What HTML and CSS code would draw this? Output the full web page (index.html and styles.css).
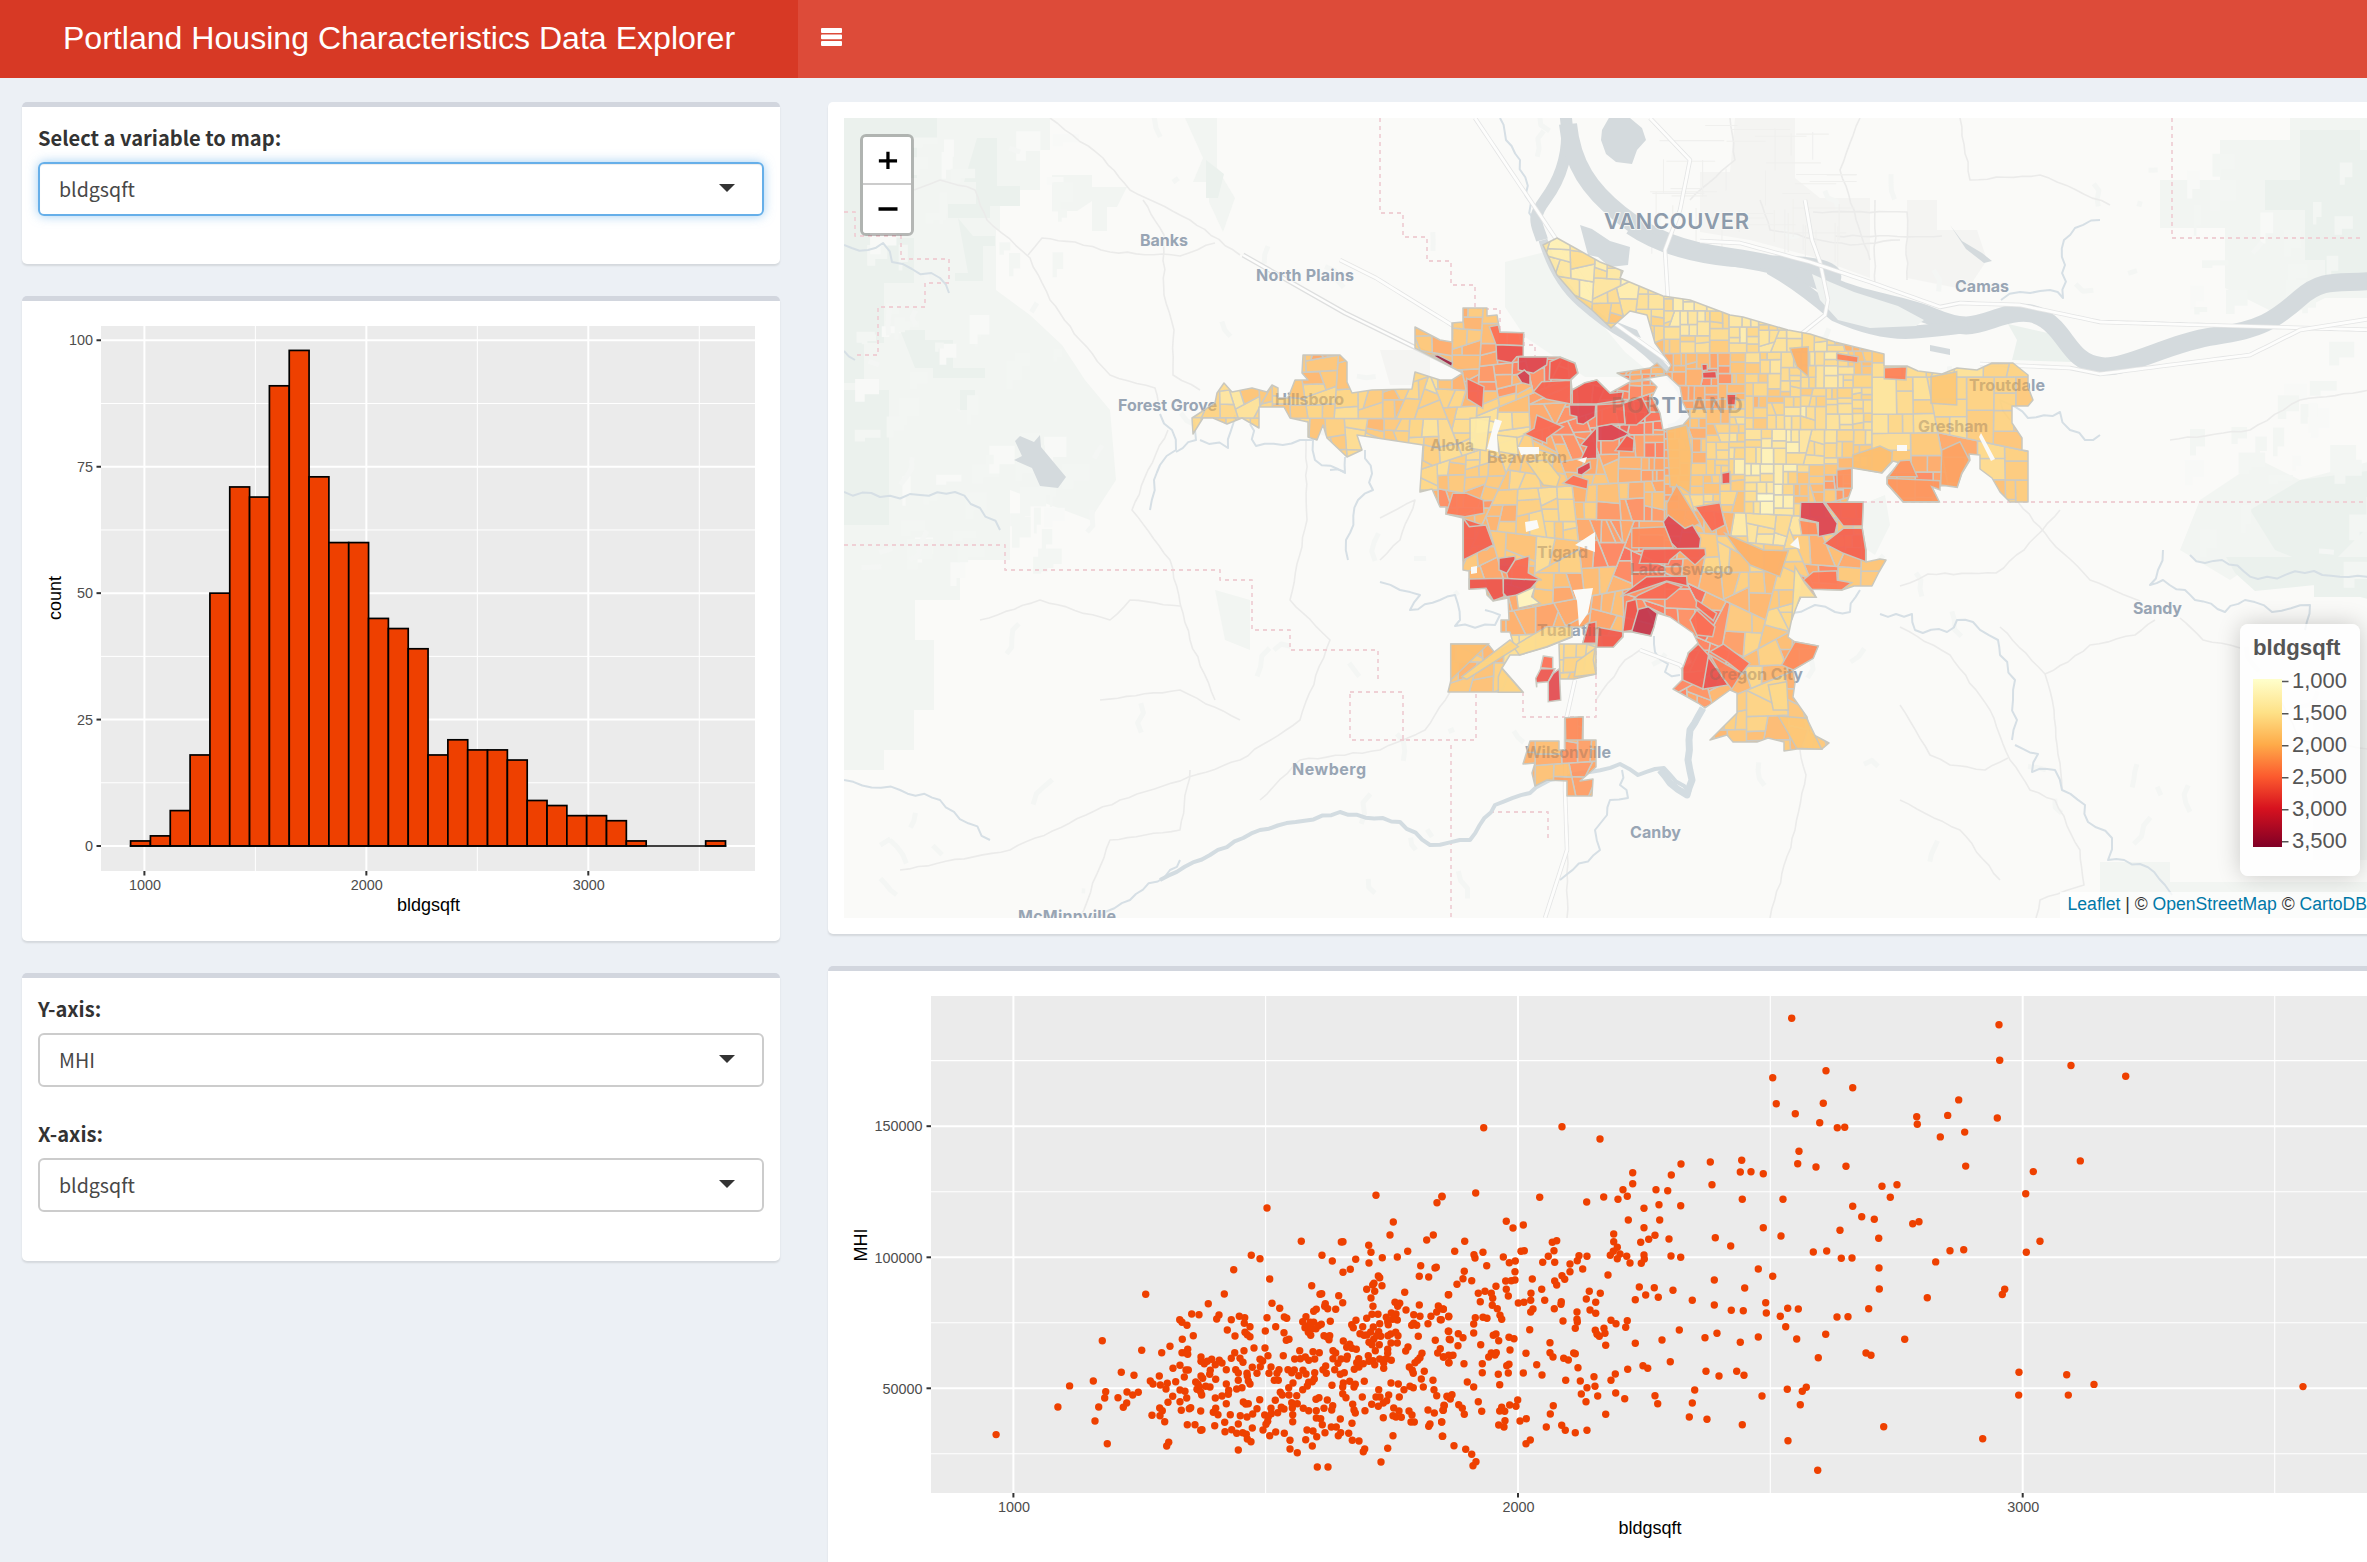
FILE: index.html
```html
<!DOCTYPE html>
<html lang="en">
<head>
<meta charset="utf-8">
<title>Portland Housing Characteristics Data Explorer</title>
<link rel="stylesheet" href="styles.css">
</head>
<body>
<header class="header">
  <div class="logo">Portland Housing Characteristics Data Explorer</div>
  <svg class="burger" width="22" height="19" viewBox="0 0 22 19"><path fill="#fff" d="M1 0h19a1 1 0 0 1 1 1v3a1 1 0 0 1-1 1H1a1 1 0 0 1-1-1V1a1 1 0 0 1 1-1zM1 6.6h19a1 1 0 0 1 1 1v2.6a1 1 0 0 1-1 1H1a1 1 0 0 1-1-1V7.600a1 1 0 0 1 1-1zM1 13h19a1 1 0 0 1 1 1v3a1 1 0 0 1-1 1H1a1 1 0 0 1-1-1v-3a1 1 0 0 1 1-1z"/></svg>
</header>
<main class="content">
  <div class="side">
    <section class="box box-select">
      <label class="label">Select a variable to map:</label>
      <div class="select focus"><span>bldgsqft</span><i class="caret"></i></div>
    </section>
    <section class="box box-hist">
      <svg id="hist" class="plot" width="758" height="640" viewBox="22 301 758 640"></svg>
    </section>
    <section class="box box-axes">
      <label class="label">Y-axis:</label>
      <div class="select"><span>MHI</span><i class="caret"></i></div>
      <label class="label label-next">X-axis:</label>
      <div class="select"><span>bldgsqft</span><i class="caret"></i></div>
    </section>
  </div>
  <div class="wide">
    <section class="box box-map">
      <div class="map">
        <svg id="map" class="plot" width="1531" height="800" viewBox="844 118 1531 800"></svg>
        <div class="zoom">
          <svg class="zoom-btn" width="48" height="48" viewBox="0 0 48 48"><path d="M15.500 25h19M25 15.500v18" stroke="#000" stroke-width="3.400"/></svg>
          <svg class="zoom-btn zoom-out" width="48" height="48" viewBox="0 0 48 48"><path d="M15.500 24h19" stroke="#000" stroke-width="3.400"/></svg>
        </div>
        <div class="legend">
          <svg class="plot" width="120" height="252" viewBox="2240 624 120 252">
            <defs><linearGradient id="ramp" x1="0" y1="0" x2="0" y2="1"><stop offset="0" stop-color="#ffffcc"/><stop offset=".2" stop-color="#fee187"/><stop offset=".39" stop-color="#feab49"/><stop offset=".58" stop-color="#fc5b2e"/><stop offset=".77" stop-color="#d7121f"/><stop offset="1" stop-color="#800026"/></linearGradient></defs>
            <text class="legend-title" x="2253" y="655">bldgsqft</text>
            <rect x="2253" y="679" width="29" height="168" fill="url(#ramp)"/>
            <path d="M2282 681.500h6.500M2282 713.700h6.500M2282 745.700h6.500M2282 777.700h6.500M2282 809.700h6.500M2282 841.700h6.500" stroke="#555" stroke-width="1.500"/>
            <g class="legend-text"><text x="2347" y="688">1,000</text><text x="2347" y="720">1,500</text><text x="2347" y="752">2,000</text><text x="2347" y="784">2,500</text><text x="2347" y="816">3,000</text><text x="2347" y="848">3,500</text></g>
          </svg>
        </div>
        <div class="attribution"><a>Leaflet</a> | © <a>OpenStreetMap</a> © <a>CartoDB</a></div>
      </div>
    </section>
    <section class="box box-scatter">
      <svg id="scatter" class="plot" width="1563" height="620" viewBox="828 971 1563 620"></svg>
    </section>
  </div>
</main>
<script src="charts.js"></script>
</body>
</html>
```

FILE: styles.css
```css
* { box-sizing: border-box; }
html, body { height: 1562px; overflow: hidden; }
body { margin: 0; background: #ecf0f5; font-family: "Noto Sans CJK SC", "Noto Sans", sans-serif; color: #333; }
.header { display: flex; align-items: center; height: 78px; background: #dd4b39; }
.logo { width: 798px; height: 78px; line-height: 77px; background: #d73925; color: #fff; text-align: center; font-family: "Liberation Sans", Arial, sans-serif; font-size: 32.1px; white-space: nowrap; }
.burger { margin: -4px 0 0 23px; }
.content { display: flex; gap: 48px; padding: 24px 0 0 22px; }
.side { width: 758px; flex: none; display: flex; flex-direction: column; gap: 32px; }
.wide { width: 1563px; flex: none; display: flex; flex-direction: column; gap: 32px; }
.box { background: #fff; border-top: 5px solid #d2d6de; border-radius: 5px; box-shadow: 0 2px 2px rgba(0,0,0,.1); }
.box-select { height: 162px; padding: 16px 16px 0; }
.box-hist { height: 645px; overflow: hidden; }
.box-axes { height: 288px; padding: 16px 16px 0; }
.box-map { height: 832px; border-top: 0; padding: 16px; }
.box-scatter { height: 640px; }
.label { display: block; height: 39px; line-height: 29px; font-size: 20.1px; font-weight: 700; }
.label-next { margin-top: 32px; }
.select { display: flex; justify-content: space-between; align-items: center; height: 54px; border: 2px solid #ccc; border-radius: 6px; padding: 0 27px 0 19px; font-size: 19.6px; line-height: 50px; color: #484848; }
.focus { border-color: #66afe9; box-shadow: inset 0 1px 1px rgba(0,0,0,.075), 0 0 11px rgba(102,175,233,.6); }
.caret { width: 0; height: 0; border: 8px solid transparent; border-top: 8px solid #333; border-bottom: 0; margin-top: -2px; }
.plot { display: block; }
.map { position: relative; width: 1531px; height: 800px; overflow: hidden; }
.zoom { position: absolute; left: 16px; top: 16px; width: 54px; height: 102px; border: 3px solid rgba(0,0,0,.25); border-radius: 6px; background-clip: padding-box; overflow: hidden; }
.zoom-btn { display: block; background: #fff; }
.zoom-btn:first-child { height: 46px; }
.zoom-out { height: 50px; border-top: 2px solid #ccc; }
.legend { position: absolute; left: 1396px; top: 506px; width: 120px; height: 252px; border-radius: 8px; background: rgba(255,255,255,.8); box-shadow: 0 0 23px rgba(0,0,0,.2); }
.legend-title { font: 700 22.2px "Liberation Sans", Arial, sans-serif; fill: #555; }
.legend-text { font: 22px "Liberation Sans", Arial, sans-serif; fill: #555; text-anchor: end; }
.attribution { position: absolute; right: 0; bottom: 0; height: 26px; line-height: 25px; padding: 0 8px; background: rgba(255,255,255,.7); font-family: "Liberation Sans", Arial, sans-serif; font-size: 17.6px; white-space: nowrap; }
.attribution a { color: #0078a8; }
.tick-text { font: 14.4px "Liberation Sans", Arial, sans-serif; fill: #4d4d4d; }
.axis-title { font: 18px "Liberation Sans", Arial, sans-serif; fill: #000; text-anchor: middle; }
.place { font: 700 16px Inter, sans-serif; fill: #98a5b4; stroke: #fafaf8; stroke-width: 1.500px; paint-order: stroke; }
.city { font-weight: 600; font-size: 22px; fill: #8d9bab; }
.veiled .place { fill: #7d6a5a; stroke: none; }
```

FILE: charts.js
```js
const $ = id => document.getElementById(id);

/* ---------- histogram ---------- */
(() => {
  const counts = [1,2,7,18,50,71,69,91,98,73,60,60,45,43,39,18,21,19,19,17,9,8,6,6,5,1,0,0,0,1];
  const y = v => 846 - v * 5.057, x = v => 144.4 + (v - 1000) * .22195;
  let s = '<rect x="101" y="326" width="654" height="545" fill="#ebebeb"/>';
  const line = (x1, y1, x2, y2, w, c) => `<path d="M${x1} ${y1}L${x2} ${y2}" stroke="${c}" stroke-width="${w}"/>`;
  for (const v of [12.5, 37.5, 62.5, 87.5]) s += line(101, y(v), 755, y(v), 1, '#fff');
  for (const v of [1500, 2500, 3500]) s += line(x(v), 326, x(v), 871, 1, '#fff');
  for (const v of [0, 25, 50, 75, 100]) {
    s += line(101, y(v), 755, y(v), 2, '#fff') + line(96.5, y(v), 101, y(v), 2, '#333');
    s += `<text class="tick-text" x="93" y="${y(v) + 5}" text-anchor="end">${v}</text>`;
  }
  for (const v of [1000, 2000, 3000]) {
    s += line(x(v), 326, x(v), 871, 2, '#fff') + line(x(v), 871, x(v), 875.5, 2, '#333');
    s += `<text class="tick-text" x="${x(v) + .5}" y="890" text-anchor="middle">${v}</text>`;
  }
  counts.forEach((c, i) => {
    s += `<rect x="${130.6 + i * 19.83}" y="${y(c)}" width="19.83" height="${c * 5.057}" fill="#ee4000" stroke="#000" stroke-width="1.7"/>`;
  });
  s += line(129.8, 846, 726.3, 846, 1.7, '#000');
  s += '<text class="axis-title" x="428.500" y="911">bldgsqft</text><text class="axis-title" transform="translate(61 598)rotate(-90)">count</text>';
  $('hist').innerHTML = s;
})();

/* ---------- scatter ---------- */
(() => {
  const groups = [
    {x: 830, y: 960, sx: 2.8, sy: 2.613, p: '465 1240 638 1168 671 1113'},
    {x: 1090, y: 1180, sx: 3, sy: 3, p: `10 603 37 482 47 635 44 654 26 681 15 723 52 791 94 577 132 586 84 653 111 636 128 645 145 637 110 669 100 682 155 511 167 343 215 518 240 499 181 603 189 612 208 588 211 615 232 610 228 627 248 649 234 667 257 605 249 565 270 556 283 591 288 570 295 570 276 518 293 508 293 523 286 518 277 478 310 467 269 419 276 427 291 436 305 402 327 404 355 371 403 342 431 269 484 226 510 236 531 84 539 297 546 370 569 385 583 411 590 415 531 413 557 440 526 453 380 417 387 405 424 419 412 450 448 409 464 413 463 430 480 440 465 457 472 464 480 470 435 468 582 458 589 481 597 478 634 184 696 226 727 243 754 186 759 185 836 196 843 217 837 249 797 238 781 268 759 277 877 233 922 231 953 214 900 165 910 126 858 46 1041 68 1056 49 1010 180 1030 165 992 257 1035 264 1039 262 988 289 1016 291 665 317 690 343 695 341 746 347 758 368 706 371 704 379 713 386 737 388 671 394 679 388 648 410 865 288 869 293 852 310 848 315 830 328 854 334 876 317 843 354 849 379 944 337 915 367 929 370 923 379 948 390 988 375 971 404 990 409 904 399 918 402 889 412 922 420 895 434 893 425 908 418 846 403 864 403 830 415 798 421 785 434 790 443 818 440 869 431 850 441 810 461 822 466 831 465 842 456 866 455 872 469 860 467 851 478 837 487 846 494 868 494 856 512 893 508 893 520 638 425 645 443 661 427 671 427 655 437 666 446 678 446 686 437 694 433 721 424 655 457 662 466 702 467 719 467 717 479 711 471 760 483 779 493 770 502 786 505 799 508 903 489 922 489 894 467 902 462 917 457 924 467 965 436 980 436 971 430 985 469 1014 431 1023 409 1051 419 1045 378 1049 386 1060 387 1040 396 1075 344 1076 409 1075 454 1078 478 1036 481 954 501 947 513 1051 506 1043 519 1061 531 1076 526 1076 548 996 520 990 533 975 548 983 541 958 561 967 571 970 580 1003 574 994 597 1029 601 1000 621 970 623 960 619 942 629 928 651 903 609 925 612 896 645 890 662 880 669 858 651 870 651 866 629 845 673 865 679 823 604 817 651 796 613 792 621 779 604 760 609 758 621 758 641 768 653 788 673 792 690 825 692 796 699 880 713 911 684 927 693 909 707 918 711 934 712 957 693 966 705 963 726 973 726 1014 690 1033 699 1020 732 1016 739 1055 726 1060 691 1063 677 1040 647 1071 649 1032 629 1057 769 909 767 893 805 873 846 824 807 820 815 807 783 787 781 776 760 786 730 751 717 745 767 752 758 739 741 724 741 705 758 697 734 680 770 669 753 651 750 647 779 667 798 682 861 714 861 622 818 600 807 600 781 583 760 557 756 539 767 487 744 483 785 472 777 469 763 458 758 440 760 445 732 425 749 405 755 404 727 374 737 336 749 332 751 315 734 292 734 224 725 217 692 209 684 210 707 186 706 236 787 230 798 445 810 274 691 302 683 298 686 332 693 370 697 377 685 384 704 421 704 451 707 471 711 488 702 501 686 509 659 475 671 460 666 467 672 409 671 376 654 396 648 415 643 416 631 409 612 377 598 445 601 440 627 456 623 480 612 475 603 471 580 472 588 437 569 445 579 409 569 376 554 388 541 396 549 365 538 333 531 333 544 343 551 352 544 361 571 359 583 333 588 338 595 317 606 324 613 321 628 328 621 332 636 335 645 347 619 360 621 270 630 285 634 290 654 270 665 434 518 424 535 450 535 459 547 462 512 492 504 525 504 534 527 510 538 518 543 511 560 487 562 501 580 537 580 543 561 561 580 567 569 580 527 553 601 565 601 571 637 577 645 597 645 620 647 596 623 609 609 605 668 622 671 607 684 608 704 608 725 582 687 574 682 563 698 543 685 544 701 556 661 524 705 535 711 533 724 528 733 519 750 640 685 656 692 679 692 678 658 687 653 712 660 702 685 728 677 725 690 679 714 692 716 638 629 652 618 656 607 667 605 673 597 674 578 648 582 626 587 639 571 605 578 613 570 594 569 614 537 631 536 629 512 646 531 656 541 669 515 674 537 688 518 707 558 699 569 709 580 734 569 729 512 737 519 729 536 744 550 753 537 770 537 772 529 763 578 751 583 726 616 793 568 806 536 800 548 807 561 820 551 835 527 837 544 849 542 854 554 869 537 881 549 881 565 889 536 904 541 880 540`},
    {x: 1440, y: 980, sx: 3, sy: 3, p: `1055 115 998 293 1009 371 1158 272 1238 323 1150 370 1066 401 1139 428 1192 443 1214 442 1430 410 1432 433 131 443 366 440 480 477 1077 514 1073 551 1128 561 1218 559 811 546 905 541 901 576 933 575 970 581 816 614 723 552 694 585 578 578 578 611 549 629 562 649 534 658 491 651 440 666 299 652 107 639 6 650 648 629 683 632 657 674 612 685 722 677 907 658 1029 658 1326 619 1371 614 1351 652 1238 679 1265 710 1303 718 1200 751 1316 775 1418 731 1437 725 565 720 659 720 612 743 970 743 1023 768 1120 816 1160 813 1204 835 1236 834 199 724 219 744 250 735 826 773 872 798 74 784 44 814 102 824 105 834 129 817 140 857 190 831 208 848 226 843 243 814 253 812 337 787 350 782 342 812 325 829 308 847 344 847 521 762 521 785 532 802 520 814 511 826 540 822 532 836 560 829 570 849 602 787 626 778 645 766 687 777 612 825 613 837 604 850 693 828 722 832 417 827 441 829 412 842 390 852 428 867 390 875 366 887 374 898 344 903 350 915 504 885 73 874 69 896 95 902 51 913 26 944 168 919 197 903 214 902 225 900 225 875 199 928 205 948 277 897 305 928 273 940 314 961 272 961 252 967 235 969 115 940 135 934 154 940 158 955 121 965 157 976 172 986 279 987 272 996 343 986 364 965 363 973 448 934 481 940 439 957 467 967 450 990 467 1000 411 996 411 1018 412 1026 406 1045 369 1023 598 921 643 923 617 945 655 952 699 931 586 959 757 961 823 900 823 975 955 867 998 889 914 924 874 991 910 992 977 968 979 999 1021 1009 1043 985 1075 987 1037 1040 1317 864 1318 927 1286 986 1191 1011 1224 1010 180 1006 185 1018 106 1013 129 1012 141 1015 101 1032 26 1010 4 1019 10 988 101 1059 55 1061 69 1073 26 1054 31 1079 54 1097 122 1094 160 1066 168 1062 176 1082 207 1072 222 1076 269 1049 513 1021 528 1031 562 1022 557 1042 492 1045 466 1051 495 1060 478 1069 471 1063 497 1096 586 1090 666 1080 718 1050 795 1073 831 1060 901 1087 955 1071 1070 1077 1157 1063 1394 1078 1278 1119 1293 1126 1135 1133 210 1110 154 1119 169 1118 146 1131 165 1125 10 1131 32 1127 39 1126 27 1148 72 1151 127 1151 127 1178 200 1157 207 1153 175 1183 205 1179 250 1179 258 1120 290 1154 306 1185 330 1088 330 1118 339 1131 371 1135 385 1140 401 1119 406 1121 414 1163 377 1201 421 1203 462 1190 441 1223 465 1219 424 1242 438 1265 473 1248 513 1201 526 1182 563 1168 609 1157 623 1165 691 1145 798 1174 837 1188 890 1174 912 1186 82 1206 101 1221 179 1214 36 1244 22 1250 31 1257 115 1265 12 1276 9 1291 56 1274 67 1285 73 1303 125 1294 5 1326 8 1369 42 1397 77 1408 95 1423 108 1445 99 1457 233 1260 209 1275 228 1279 185 1282 179 1293 194 1294 195 1322 176 1335 192 1341 240 1323 259 1316 340 1277 331 1302 319 1341 365 1336 376 1351 406 1358 441 1351 271 1380 258 1391 527 1239 554 1256 497 1303 645 1247 653 1271 764 1230 757 1269 748 1311 801 1318 907 1334 966 1248 1042 1228 1099 1222 1087 1234 1081 1274 1331 1340 1044 1382 1133 1471`},
    {x: 1890, y: 980, sx: 3, sy: 2.703, p: `327 121 329 217 543 231 707 260 206 324 173 366 322 373 224 411 151 424 227 503 571 489 430 518 407 578 450 706 409 736 180 732 221 729 137 762 344 836 337 850 112 859 387 1060 386 1122 530 1067 535 1122 612 1093 1239 1099 278 1240`}
  ];
  const line = (d, w, c) => `<path d="${d}" stroke="${c}" stroke-width="${w}"/>`;
  let s = '<rect x="931" y="996" width="1460" height="497" fill="#ebebeb"/>';
  for (const y of [1060.6, 1191.7, 1322.8, 1453.8]) s += line(`M931 ${y}H2400`, 1.1, '#fff');
  for (const x of [1265.6, 1770.3, 2274.7]) s += line(`M${x} 996V1493`, 1.1, '#fff');
  [[1126.2, '150000'], [1257.3, '100000'], [1388.3, '50000']].forEach(([y, t]) => {
    s += line(`M931 ${y}H2400`, 2, '#fff') + line(`M926.500 ${y}h4.500`, 2, '#333') + `<text class="tick-text" x="922.500" y="${y + 5.2}" text-anchor="end">${t}</text>`;
  });
  [[1013.4, 1000], [1518, 2000], [2022.7, 3000]].forEach(([x, t]) => {
    s += line(`M${x} 996V1493`, 2, '#fff') + line(`M${x} 1493v4.500`, 2, '#333') + `<text class="tick-text" x="${x + .6}" y="1512" text-anchor="middle">${t}</text>`;
  });
  s += '<g fill="#ee4000">';
  for (const g of groups) {
    const n = g.p.split(/\s+/).map(Number);
    for (let i = 0; i < n.length; i += 2) s += `<circle cx="${(g.x + n[i] / g.sx).toFixed(1)}" cy="${(g.y + n[i + 1] / g.sy).toFixed(1)}" r="3.700"/>`;
  }
  s += '</g><text class="axis-title" x="1650" y="1534">bldgsqft</text><text class="axis-title" transform="translate(867 1245)rotate(-90)">MHI</text>';
  $('scatter').innerHTML = s;
})();

/* ---------- map ---------- */
(() => {
  let seed = 7;
  const rnd = () => (seed = (seed * 16807) % 2147483647) / 2147483647;
  // wiggly line through the given points
  const river = (pts, amp = 4) => {
    let d = `M${pts[0]} ${pts[1]}`;
    for (let i = 2; i < pts.length; i += 2) {
      const dx = pts[i] - pts[i - 2], dy = pts[i + 1] - pts[i - 1], L = Math.hypot(dx, dy), n = Math.max(1, Math.round(L / 9));
      for (let k = 1; k <= n; k++) {
        const o = k < n ? (rnd() - .5) * amp : 0;
        d += `L${(pts[i - 2] + dx * k / n - dy / L * o).toFixed(1)} ${(pts[i - 1] + dy * k / n + dx / L * o).toFixed(1)}`;
      }
    }
    return d;
  };
  const path = (d, c, w, extra = '') => `<path d="${d}" fill="none" stroke="${c}" stroke-width="${w}" stroke-linejoin="round" ${extra}/>`;
  let s = '<rect x="844" y="118" width="1531" height="800" fill="#fafaf8"/>';

  // forest
  s += '<g fill="#f2f5f2"><path d="M844 118H1050V150H1040V190H1000V230H996V290L1030 315L1062 345L1085 380L1110 410L1116 480L1090 520L1010 490V560H960V600H915V640H844z"/><path d="M1052 175h40v12h35l-10 20h-10v24h-15v-30l-15 10h-25zM1185 118h32v50l18 30-12 34-14-30v-20h-16l10-24z"/><path d="M1505 262l40-10 30 40 50 60 30 25-70 0-60-40-20-30z"/><path d="M2160 180h60v-40h70v-22h85v180h-50l-40 20-60-30v-60h-65z"/><path d="M2200 500l60-40 40 20 75-20v120h-75l-40-20-30 20-50-30z"/><path d="M2100 862h70v20h205v36h-275zM2313 700h62v160h-62zM1860 505l25-10 5 30-15 30-15-10z"/><path d="M844 640h90v70h-20v40h-30v20h-40zM1215 590l35 10v50l-25-10z"/></g>';
  s += '<g fill="#ebf1ed"><path d="M844 118h93v25h-20v35h-28v60h25v45h-30v60h-20v40h-20zM844 390h45v135h-45zM977 138h20v48h23v20h-30v12h-42v-14h28v-22h-12zM958 218l15 18h22v10h-12v35h-28v-8h13zM900 330h25v10h28v28h32v10h-52v-10h-18zM960 390h15v20h-15zM1206 160l18 14-6 24h-12z"/><path d="M2226 557h149v44l-60-16-60 6-20-18zM2314 573h61v24h-61z"/><path d="M2008 324l44 10 20 28-60-2 5-20zM2300 130h60v20h15v130h-50v-20h-20v-50h-40v-30h35z"/><path d="M2250 510l50-30 75-10v50l-50 50-50-20z"/></g>';
  // urban grey
  s += '<g fill="#f4f4f2"><path d="M1735 118h60v60l25 20h50v80l-60-22-60-16-50-8v-60h30zM1907 200h30v30h40l10 30-20 30-60-12v-30zM1380 350h50v35h-40z"/></g>';
  s += '<g fill="#f3f6f3">';
  for (let i = 0; i < 110; i++) {
    const east = rnd() > .7, x = east ? 2180 + rnd() * 190 : 850 + rnd() * 220, y = 125 + rnd() * 440, w = 6 + rnd() * 22, h = 5 + rnd() * 16;
    s += `<path d="M${x} ${y}h${w}v${h}h${-w * .6}v${h * .5}h${-w * .4}z" ${rnd() > .7 ? 'fill="#f8f9f7"' : ''}/>`;
  }
  s += '</g>';
  // terrain-like wisps
  for (let i = 0; i < 90; i++) {
    const x = 860 + rnd() * 1480, y = 130 + rnd() * 780;
    s += path(river([x, y, x + (rnd() - .5) * 40, y + (rnd() - .5) * 60], 10), '#f4f6f4', 5);
  }

  // minor roads
  const roads = [
    [1050,118,1103,158,1130,190,1190,220,1240,255],[914,190,940,180,975,190,987,220,1030,258,1050,300,1080,340,1110,375,1155,388,1160,410],[1143,200,1164,235,1164,295,1174,330,1173,375,1200,390],
    [1028,255,1042,238,1075,242,1110,252,1180,256,1215,243],[1168,430,1148,470,1132,510,1170,560,1190,640,1215,700],[1306,440,1307,520,1290,600,1330,640,1300,720,1240,760,1120,800,1010,850,900,870],
    [1960,118,1970,180,2040,175,2110,205],[1813,212,1907,212,1907,280],[1875,200,1875,285],[1835,236,1942,236],[1760,200,1770,230,1850,245,1900,240],
    [1900,586,1928,574,1996,573,2024,550,2060,510],[2018,502,2050,540,2090,580,2140,601],[2180,618,2203,640,2240,648],[2000,627,2045,674,2054,710,2062,790],[1900,627,1950,655,1990,710,2010,760,2030,790,2055,800],
    [2055,800,2080,850,2084,885,2040,900,2036,918],[1900,705,1930,755,1950,765,1985,770,2008,758],[2045,674,2068,662,2090,645,2135,635,2155,620],[1450,692,1425,730,1380,750,1300,760,1260,800],
    [1800,750,1806,775,1795,830,1770,918],[1596,700,1625,660,1640,650],[1567,790,1567,918],[1380,518,1415,500,1400,540,1380,560],[1844,560,1844,500],[1100,700,1180,690,1240,720],[980,620,1040,600,1110,620,1130,600,1180,606],
    [1860,118,1840,170,1870,260],[1730,118,1735,160,1690,200],[2170,440,2250,430,2300,400,2370,390],[1900,800,1960,830,2000,880],[1080,918,1110,840,1180,830,1190,770],[2280,700,2300,740,2375,750]
  ];
  for (const r of roads) s += path(river(r, 2), '#ebebea', 1.6);
  // street texture around Vancouver
  for (let i = 0; i < 45; i++) {
    const x = 1650 + rnd() * 190, y = 125 + rnd() * 110;
    s += path(rnd() > .5 ? `M${x} ${y}h${20 + rnd() * 50}` : `M${x} ${y}v${15 + rnd() * 40}`, '#f0f0ee', 1.1);
  }
  // county lines
  const county = ['M844 212h11v24h46v23h48v24h-24v24h-47v48h-25','M1380 118v95h23v24h24v24h24v24h24v24h25v24h24v12h11v12','M844 545H1005V570H1220V580H1252V630H1290V650H1378V680','M1350 692h53v48h73v-48M1523 692v25h73v-72M1404 740h-54v-48M1451 745v173M1490 812h58v30','M1863 502H2375M2172 118v120h190'];
  for (const c of county) s += path(c, '#efd0d5', 1.8, 'stroke-dasharray="4 4"');

  // streams
  const streams = [
    [844,245,868,250,883,243,892,262,912,269,940,278,949,293],[844,351,855,360],[844,492,880,497,920,495,955,492,980,508,1000,530],
    [1160,414,1172,430,1176,450,1160,465,1154,480,1150,510],[1176,452,1196,440,1194,420],[1200,440,1228,448,1235,415],[1250,424,1256,446,1300,440,1313,440,1315,460,1345,473,1345,457],
    [1330,470,1345,472],[1365,450,1373,490,1358,500,1346,540,1348,560],[1380,582,1400,590,1420,595,1410,610,1440,600,1455,595,1460,620,1455,626,1495,625,1500,615,1485,610],
    [1880,614,1912,614,1915,630,1947,632,1957,620,1973,622,1998,640,2000,655,2015,680,2013,700,2017,720,2012,740],[2015,745,2038,754,2032,772,2055,770,2062,790,2085,805,2088,822,2112,838,2108,860,2140,864,2165,885,2172,895],
    [2163,550,2158,570,2150,585,2163,580,2185,590,2195,600,2225,612,2245,600,2272,612,2310,605,2305,630],[2190,555,2205,563,2222,560,2258,579,2314,571,2375,580],
    [2010,420,2000,400,2028,418,2060,412,2070,430,2085,440,2100,435],[2001,300,2020,292,2050,290,2063,298,2065,265,2064,240,2075,228,2100,220],[1500,118,1506,140,1520,160,1535,230],
    [1793,613,1815,605,1835,612,1850,612,1860,590],[1654,636,1655,652,1668,664,1665,672,1680,675],[1622,770,1620,785,1628,798,1610,800,1607,815,1595,830,1600,850,1560,880],[844,780,900,790,940,800,990,840],
    [1090,918,1130,900,1170,870,1180,860]
  ];
  for (const r of streams) s += path(river(r, 6), '#d6dfe5', 2);
  s += path(river([1160,880,1210,855,1260,830,1340,812,1400,822,1430,845,1470,840,1495,805,1530,793,1550,780,1590,772,1620,764,1638,775,1664,768,1690,793],3), '#d3dce1', 4);
  s += path(river([1703,708,1690,730,1688,760,1692,780,1687,795,1670,783,1660,770],2), '#d3dce1', 7);

  // Columbia and Willamette
  const W = '#d4dadd';
  s += path('M1565 112C1572 150 1560 180 1545 200S1538 225 1542 240', W, 12);
  s += path('M1568 124C1572 165 1590 190 1620 214S1680 250 1730 257S1800 272 1833 287S1900 303 1933 317S1975 325 2000 317S2040 312 2055 328S2075 362 2100 366S2170 342 2215 336S2275 320 2300 298S2340 285 2380 280', W, 18);
  s += path('M1630 228Q1680 262 1770 262T1825 290M1770 268Q1800 285 1835 315Q1880 335 1915 332T1968 326', W, 13);
  s += path('M1543 240Q1555 280 1580 302T1625 335Q1650 352 1668 373', W, 9);
  s += path('M1668 374Q1685 390 1686 408T1668 428', '#f4f6f6', 8);
  s += `<g fill="${W}"><path d="M1602 130l8-14 20 2 12 10 4 12-9 10-5 14-16-2-10-8-5-14zM1580 225l12 4 18 12 20 6-2 18-18 2-12-10-10-2zM1617 322l20 8 4 8-22-8zM1950 225l12 16 20 12 10 8-8 2-18-14zM1930 345l20 4v6l-20-4z"/>
    <path d="M1015 441l5-5 14 6 6-7 1 12 10 12 15 18-8 11-18-2-8-18-18-8 8-4z"/></g>`;
  s += '<path d="M1812 274l18 8 24 10 44 14 26 14-8 6-46 2-32-8-18-20z" fill="#f0f3f1"/>';

  // freeways
  const fw = [[1340,260,1376,278,1460,330],[1650,118,1690,160,1680,210,1665,250,1668,300],[1805,200,1812,240,1820,262,1828,300,1825,315,1800,335],[1700,241,1740,243,1810,262,1870,282,1940,307,1960,303,2020,305,2100,322,2375,330],
    [1980,364,2070,368,2100,374,2170,365,2250,355,2300,330,2375,318],[1575,680,1566,720,1565,790,1567,850,1545,918],[1640,650,1680,665,1700,690],[1475,118,1530,200,1570,260,1610,320,1680,370]];
  for (const r of fw) { const d = river(r, 0); s += path(d, '#e4e5e5', 4.4) + path(d, '#fdfdfc', 2.8); }
  s += path('M1243 255L1345 313L1465 372', '#dedfdf', 5) + path('M1243 255L1345 313L1465 372', '#fdfdfc', 2.5);

  // place names
  const names = [['Banks',1140,246,48],['North Plains',1256,281,98],['Forest Grove',1118,411,99],['VANCOUVER',1604,229,145,1],['PORTLAND',1611,413,132,1],['Camas',1955,292,54],['Troutdale',1969,391,76],['Gresham',1918,432,70],['Hillsboro',1275,405,69],['Aloha',1430,451,44],['Beaverton',1487,463,80],['Tigard',1537,558,51],['Lake Oswego',1630,575,103],['Tualatin',1537,636,65],['Oregon City',1709,680,94],['Wilsonville',1525,758,86],['Canby',1630,838,51],['Sandy',2133,614,49],['Newberg',1292,775,74],['McMinnville',1018,922,98]];
  const label = ([t, x, y, w, c]) => `<text class="place${c ? ' city' : ''}" x="${x}" y="${y}" textLength="${w}">${t}</text>`;
  s += names.map(label).join('');

  // built-up area
  const outline = 'M1543 245L1557 238L1575 248L1600 262L1623 271L1620 278L1663 296L1690 300L1730 315L1743 317L1788 330L1810 334L1835 342L1884 354V366H1907L1918 371L1942 374L1957 368L1977 370L1992 363H2013L2028 375V387L2033 400L2028 406H2012V423L2022 438V450L2028 451V502H2010L2000 492L1992 478L1980 469V455L1969 454L1970 460L1962 473L1957 487L1948 485L1932 487L1939 502H1903L1887 484V477L1900 463L1893 461L1882 473L1852 468V488L1847 502H1863L1862 528L1866 550V562L1880 559L1886 560L1879 572L1872 586H1854L1842 590L1812 589L1816 597H1801L1793 613L1788 637L1795 642L1818 646L1813 658L1793 670L1795 683L1793 697L1807 717L1810 733L1829 743L1822 749H1797L1784 751V742L1768 738L1757 742H1733L1727 735L1710 740L1737 713V693L1730 690L1705 708L1698 703L1673 689L1682 680V668L1692 663L1688 653L1698 643L1693 633L1670 617L1657 613L1654 627L1651 636L1632 632H1623V637L1613 647H1596L1583 643L1588 623L1582 627H1572V637L1547 647L1520 655H1510L1502 668L1523 692H1448L1451 680V644H1488L1495 653L1513 643L1510 632H1501V620H1509L1508 598L1493 601L1487 595L1486 588L1469 589V571L1463 570V518L1446 514V507H1440L1432 489L1420 492V490L1423 445L1357 435L1362 450L1347 457L1327 438L1323 425L1317 440L1308 437V422L1290 418L1284 407H1259V428L1242 418L1227 424L1213 418H1203L1193 434L1192 418L1215 403L1217 393L1224 383L1232 392L1252 388L1267 392L1272 385L1278 388V398H1288L1295 380H1308L1302 373L1303 355H1340L1347 362V382L1352 393L1372 390L1412 389L1415 372L1440 380H1452L1463 373L1415 348V327L1440 340L1452 342V323L1463 322V308H1487V316L1497 315L1500 332L1523 333V357H1548L1560 357L1575 363L1578 373L1571 380L1572 390L1585 383L1597 380L1610 393L1630 382L1650 380L1657 387L1652 397L1660 413L1663 430L1683 425L1690 417L1683 403L1680 387L1667 375L1632 381L1617 373L1650 368L1657 363L1667 373L1671 365L1655 343L1647 315L1630 311L1611 328L1592 310L1577 298L1557 275z'
    + 'M1559 644H1596V674L1574 679H1560z'
    + 'M1565 718L1583 717V740H1596V767L1580 781L1593 779L1592 796H1567V781L1547 780L1535 786L1532 773L1535 763L1523 764L1530 741H1559V750H1565z';

  const stops = [[1000,255,250,200],[1300,254,238,174],[1500,253,224,148],[1750,253,210,128],[1950,253,191,112],[2100,253,170,103],[2350,253,142,95],[2600,252,112,86],[2850,238,88,80],[3100,219,70,84],[3500,155,38,76]];
  const colour = v => {
    v = Math.max(1000, Math.min(3499, v));
    let i = 1; while (stops[i][0] < v) i++;
    const a = stops[i - 1], b = stops[i], t = (v - a[0]) / (b[0] - a[0]);
    return `rgb(${[1, 2, 3].map(k => Math.round(a[k] + (b[k] - a[k]) * t))})`;
  };
  // sampled values: x, y, square feet
  const field = [[1560,255,1350],[1590,285,1400],[1640,290,1350],[1605,315,1750],[1690,315,1400],[1700,345,1700],[1740,335,1500],[1790,350,1500],[1830,370,1450],[1860,350,2000],[1680,375,2000],[1710,370,2350],[1720,400,2200],[1760,405,1900],[1700,420,1950],[1740,430,1600],[1790,420,1400],[1810,380,1750],[1860,400,1600],[1900,390,1600],[1940,400,1750],[1990,385,1600],[1920,430,1650],[1870,440,1450],[1960,420,1700],[2000,440,1950],[2010,480,1900],[1990,460,1600],[1950,460,2150],[1910,485,2300],[1870,455,1850],[1820,450,1450],[1780,460,1350],[1750,470,1300],[1770,500,1150],[1735,490,1900],[1810,490,1950],[1840,480,2250],[1770,530,1400],[1740,520,1500],[1720,530,2150],[1790,535,1500],[1720,440,1700],[1690,450,1950],[1700,490,1750],[1660,450,2400],[1640,420,2700],[1600,400,2850],[1620,430,2750],[1560,375,2700],[1530,350,2600],[1500,345,2300],[1480,325,1950],[1440,345,2000],[1460,360,1950],[1500,380,2300],[1520,400,1950],[1560,400,2250],[1550,430,2300],[1590,450,2500],[1620,445,2400],[1655,470,2200],[1640,480,1950],[1610,470,1900],[1580,480,2100],[1600,500,1850],[1560,500,1600],[1530,480,1700],[1540,460,1700],[1510,415,1450],[1500,430,1500],[1480,425,1400],[1480,390,2200],[1450,400,1850],[1430,385,1650],[1420,420,1600],[1450,440,1600],[1390,410,1850],[1370,420,1950],[1345,420,1650],[1330,370,2050],[1310,365,2050],[1320,395,1800],[1300,400,1700],[1260,395,2050],[1225,395,1450],[1205,415,1750],[1250,410,1500],[1310,425,1750],[1350,445,1750],[1430,470,1600],[1470,480,1700],[1445,495,2250],[1480,510,2200],[1500,490,1900],[1520,510,1950],[1550,520,1650],[1530,540,1900],[1490,545,1950],[1500,570,2250],[1550,560,1750],[1590,580,1950],[1540,600,1950],[1520,615,2050],[1560,610,2150],[1530,650,1550],[1480,660,1900],[1510,680,1700],[1580,660,1700],[1550,760,2100],[1580,750,2150],[1610,520,2200],[1640,520,2300],[1620,550,2550],[1660,560,2550],[1640,590,2500],[1610,600,2000],[1690,600,2550],[1660,600,2450],[1700,620,2550],[1710,650,2550],[1700,670,2600],[1680,540,2300],[1710,560,1800],[1730,590,1950],[1740,620,1950],[1760,600,1900],[1720,560,1600],[1780,560,2000],[1830,560,2100],[1860,575,1950],[1820,580,2400],[1790,580,1850],[1780,620,1700],[1760,640,1800],[1750,690,1850],[1770,700,1600],[1790,730,1850],[1740,730,1900],[1800,650,2350],[1800,700,2100]];
  const val = (x, y) => {
    let a = 0, b = 0;
    for (const f of field) { const w = 1 / (Math.pow((f[0] - x) ** 2 + (f[1] - y) ** 2, 1.6) + 50); a += w * f[2]; b += w; }
    return a / b;
  };
  const target = (x, y) => x > 1640 && x < 1870 && y < 510 ? 150 : x > 1860 ? 560 : y > 540 ? 430 : 290;
  const area = p => { let a = 0; for (let i = 0; i < p.length; i++) { const q = p[(i + 1) % p.length]; a += p[i][0] * q[1] - q[0] * p[i][1]; } return Math.abs(a / 2); };
  const cut = (p, cx, cy, nx, ny, sg) => {
    const out = [];
    p.forEach((a, i) => {
      const b = p[(i + 1) % p.length], da = sg * ((a[0] - cx) * nx + (a[1] - cy) * ny), db = sg * ((b[0] - cx) * nx + (b[1] - cy) * ny);
      if (da >= 0) out.push(a);
      if (da * db < 0) { const t = da / (da - db); out.push([a[0] + (b[0] - a[0]) * t, a[1] + (b[1] - a[1]) * t]); }
    });
    return out;
  };
  const cells = [];
  const split = p => {
    const xs = p.map(a => a[0]), ys = p.map(a => a[1]);
    const x0 = Math.min(...xs), x1 = Math.max(...xs), y0 = Math.min(...ys), y1 = Math.max(...ys);
    const cx = x0 + (x1 - x0) * (.33 + rnd() * .34), cy = y0 + (y1 - y0) * (.33 + rnd() * .34);
    if (area(p) < target(cx, cy) * (.65 + rnd() * 1.3)) { cells.push([p, (x0 + x1) / 2, (y0 + y1) / 2]); return; }
    const jitter = cx > 1640 && cy < 510 ? (rnd() > .88 ? .8 : .04) : cy > 500 || cx < 1640 ? (rnd() > .5 ? .15 : 1) : .3;
    const ang = ((x1 - x0) > (y1 - y0) ? 0 : Math.PI / 2) + (rnd() - .5) * jitter;
    const nx = Math.cos(ang), ny = Math.sin(ang);
    split(cut(p, cx, cy, nx, ny, 1)); split(cut(p, cx, cy, nx, ny, -1));
  };
  split([[1190,235],[2035,235],[2035,800],[1190,800]]);
  s += `<clipPath id="city"><path d="${outline}"/></clipPath><g clip-path="url(#city)" stroke="#c9c8bf" stroke-width="1.500" opacity=".93">`;
  for (const [p, x, y] of cells) {
    const v = val(x, y) + (rnd() - .5) * 360;
    s += `<path d="M${p.map(a => a.map(n => n.toFixed(1)).join(' ')).join('L')}z" fill="${colour(v)}"/>`;
  }
  s += '</g>' + path(outline, '#c9c8bf', 1.5);

  // individual tracts: crop origin x, y, value, points in thirds of a pixel
  const tracts = [
    [1330,200,3500,'305 465 325 465 368 487 365 500'],[1330,200,2600,'478 380 505 375 510 397 581 398 580 437 498 434'],[1330,200,2900,'498 434 580 437 580 468 560 470 545 488 500 480'],
    [1330,200,3050,'565 471 653 470 650 495 610 520 565 510'],[1330,200,3150,'560 525 583 510 600 525 600 555 575 548'],[1330,200,2800,'660 485 690 472 735 490 743 520 720 540 658 538'],
    [1330,200,2850,'727 570 765 548 800 540 840 580 880 575 875 600 800 612 727 612'],[1330,200,2700,'635 545 722 541 722 612 650 598 610 575'],[1330,200,3050,'718 615 797 614 795 650 760 673 742 670 740 650 720 645'],
    [1330,200,3080,'803 678 845 672 900 703 850 722 803 722'],[1330,200,2950,'752 735 800 682 800 775 752 778 770 740'],[1330,200,3100,'742 805 780 785 782 805 755 825 742 822'],[1330,200,2800,'880 610 935 590 960 640 920 675 885 675'],
    [1330,200,2700,'800 614 880 610 885 672 845 672 800 680'],[1330,200,2650,'620 645 700 680 650 715 650 730 582 702 612 685'],[1330,200,2700,'410 535 462 560 458 625 412 597'],[1330,200,2800,'855 752 890 705 912 718 910 755'],
    [1330,200,2600,'698 850 730 825 775 840 772 868'],[1330,200,1350,'420 655 480 650 468 752 420 745'],[1330,200,1400,'500 705 560 712 565 765 508 755'],[1330,200,1600,'590 785 650 780 690 830 680 860 640 855'],
    [1330,200,1950,'1010 690 1070 675 1085 760 1080 880 1050 860 1020 860'],[1330,200,2150,'1010 910 1040 855 1110 970 1080 985 1060 1000 1010 945'],[1330,200,2650,'1095 920 1170 908 1185 975 1145 995'],[1330,200,3050,'1000 965 1015 945 1065 985 1088 975 1112 1015 1108 1050 1045 1050 1015 1020'],
    [1330,200,2900,'1115 493 1132 493 1132 510 1117 512'],[1330,200,2950,'1117 517 1158 514 1160 534 1118 535'],[1330,200,2700,'400 955 460 975 470 1000 490 1030 470 1050 400 1050'],[1330,200,2500,'368 880 410 880 460 900 462 940 405 950 348 942'],
    [1700,200,2900,'80 583 108 583 106 615 82 615'],[1700,200,2900,'65 820 90 815 90 850 66 852'],[1700,200,2450,'553 503 620 500 618 540 553 536'],[1700,200,2450,'410 460 475 470 473 488 410 480'],[1700,200,2050,'270 445 325 440 325 530 290 500'],
    [1700,200,1950,'458 765 540 738 577 755 575 785 545 818 458 803'],[1700,200,2300,'600 782 630 780 652 830 565 830'],[1700,200,2250,'562 835 720 842 720 870 695 860 718 905 610 905 562 852'],[1700,200,2150,'725 750 780 725 808 780 785 820 772 862 722 855'],
    [1700,200,2300,'410 810 455 805 455 865 412 865'],[1700,200,1850,'693 530 770 515 770 615 693 610'],[1700,200,3080,'302 907 370 907 412 970 405 1000 355 1010 355 968 300 955'],[1700,200,2750,'375 907 490 907 487 978 430 978'],[1700,200,2720,'430 985 487 985 497 1050 497 1085 430 1060 372 1030'],[1700,200,2350,'298 960 350 968 355 1005 305 1005'],
    [1380,480,2950,'357 235 405 228 407 260 380 280 357 270'],[1380,480,2650,'405 240 448 228 445 278 485 300 385 300 380 280'],[1380,480,2850,'268 297 370 295 372 350 340 362 318 325 268 328'],[1380,480,3050,'370 295 475 300 440 340 380 350 370 340'],
    [1380,480,2750,'250 115 268 140 318 135 340 195 250 240'],[1380,480,1050,'410 345 465 320 455 350 480 370 415 385'],[1380,480,1550,'415 490 500 440 575 440 575 470 500 500 418 525 400 500'],[1380,480,1950,'212 492 325 492 212 600'],[1380,480,1700,'245 590 390 480 415 500 260 598'],[1380,480,1700,'365 565 428 637 355 637 355 590'],
    [1380,480,2750,'790 207 975 205 977 225 945 255 900 215 870 240 865 252 778 250'],[1380,480,2850,'720 350 800 290 920 288 922 318 860 303'],[1380,480,2650,'775 345 860 305 905 320 860 358 760 358'],[1380,480,2850,'740 365 768 358 775 400 765 450 728 455'],[1380,480,3250,'775 388 805 380 832 400 822 440 812 467 755 455'],
    [1380,480,2800,'655 442 728 455 728 470 700 502 650 502'],[1380,480,2850,'625 430 648 425 648 490 608 490'],[1380,480,2350,'755 145 855 140 880 203 755 203'],[1380,480,2650,'950 360 1010 400 1000 422 948 380'],[1380,480,2600,'930 420 950 390 1005 440 998 470 950 465'],[1380,480,2600,'990 515 1030 492 1110 550 1085 580 1040 545'],
    [1380,480,2750,'925 520 955 492 990 530 970 628 908 600 908 565'],[1380,480,2900,'985 530 1045 615 968 628'],[1380,480,2450,'990 525 1085 580 1055 628 1030 595'],[1380,480,2500,'1300 275 1370 272 1372 300 1415 308 1385 330 1295 328 1270 300'],[1380,480,2350,'1245 485 1315 498 1300 535 1240 570 1205 555'],
    [1380,480,2050,'1035 160 1150 210 1225 212 1200 290 1110 255 1070 210'],[1380,480,1450,'1245 260 1275 310 1308 352 1260 352 1235 420'],[1380,480,1600,'1165 615 1220 605 1225 690 1180 690'],[1380,480,1850,'1195 708 1280 715 1325 808 1250 805'],
    [1380,480,2600,'490 528 518 532 518 566 482 563'],[1380,480,2850,'482 566 525 566 505 605 470 608 470 622 467 595'],[1380,480,3000,'520 580 538 566 542 660 505 665 505 605'],[1380,480,2350,'556 713 609 710 607 780 557 780'],[1380,480,1600,'640 540 648 582 583 590 590 545 645 505']
  ];
  s += '<g stroke="#c9c8bf" stroke-width="1.500" opacity=".94">';
  for (const [ox, oy, v, pts] of tracts) {
    const n = pts.split(' ').map(Number), q = [];
    for (let i = 0; i < n.length; i += 2) q.push((ox + n[i] / 3).toFixed(1) + ' ' + (oy + n[i + 1] / 3).toFixed(1));
    s += `<path d="M${q.join('L')}z" fill="${colour(v)}"/>`;
  }
  s += '</g>';
  // gaps without data
  s += '<g fill="#fafaf8"><path d="M1487 449l8-30 7 2-5 14 1 17zM1518 447h21v7l-18 1zM1573 590l20-2-5 25-9 13-2-25zM1525 522l12-2 2 8-13 4zM1575 545l20-13v20zM1790 545l8-8 2 12zM1897 445h10v6h-10zM1981 433l14 26-4 2-12-24zM1471 567l6-1v7l-6 1zM1577 460l10-3-2 6z"/></g>';
  // names showing through the translucent tracts
  s += `<g class="veiled" clip-path="url(#city)" opacity=".3">${names.map(label).join('')}</g>`;
  $('map').innerHTML = s;
})();
```
